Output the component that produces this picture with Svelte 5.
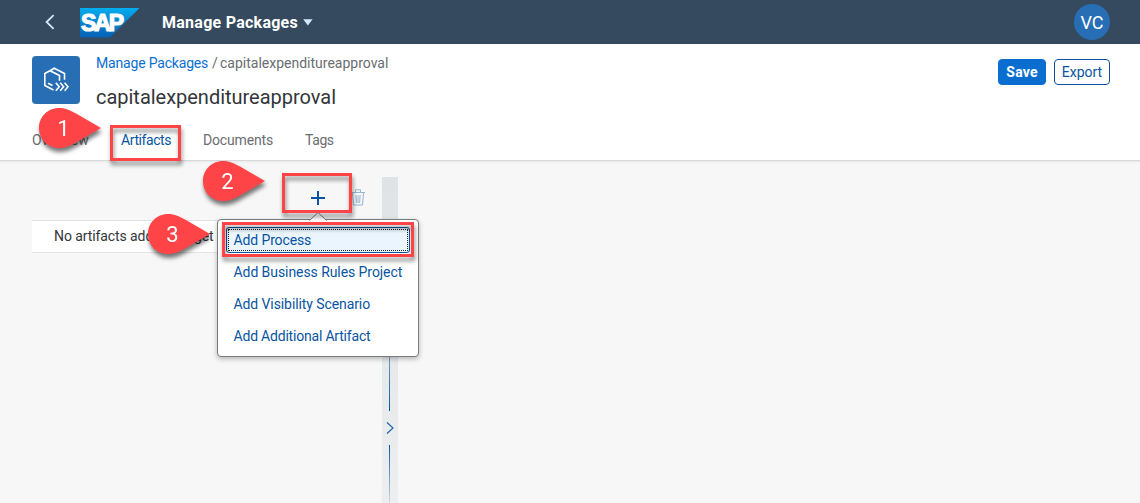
<script lang="ts">
  const tabs = [
    { label: 'Overview', cls: 'overview' },
    { label: 'Artifacts', cls: 'artifacts' },
    { label: 'Documents', cls: 'documents' },
    { label: 'Tags', cls: 'tags' }
  ];
  const actions = [
    { label: 'Add Process', cls: 'process' },
    { label: 'Add Business Rules Project', cls: 'rules' },
    { label: 'Add Visibility Scenario', cls: 'visibility' },
    { label: 'Add Additional Artifact', cls: 'additional' }
  ];
  const pins = [
    { n: 1, x: 38, y: 107 },
    { n: 2, x: 202, y: 160 },
    { n: 3, x: 147, y: 213 }
  ];
  const frames = [
    { x: 110, y: 125, w: 71, h: 36 },
    { x: 282, y: 173, w: 70, h: 40 },
    { x: 222, y: 222, w: 192, h: 35 }
  ];
</script>

<div class="page">
  <header class="shell">
    <svg class="back" width="12" height="16" viewBox="0 0 12 16"><path d="M9.6 1.2 2.6 8l7 6.8" fill="none" stroke="#d1e8ff" stroke-width="1.8" /></svg>
    <svg class="logo" width="60" height="30" viewBox="0 0 60 30">
      <defs>
        <linearGradient id="sap" x1="0" y1="0" x2="0" y2="1">
          <stop offset="0" stop-color="#00aeef" />
          <stop offset=".5" stop-color="#0a83cc" />
          <stop offset="1" stop-color="#0761b5" />
        </linearGradient>
      </defs>
      <path d="M0 0h59.500L30 29.500H0z" fill="url(#sap)" />
      <text x="1" y="23" textLength="43" lengthAdjust="spacing">SAP</text>
    </svg>
    <span class="product">Manage Packages</span>
    <svg class="caret" width="10" height="7" viewBox="0 0 10 7"><path d="M.2.3h9.400L4.900 6.500z" fill="#d1e8ff" /></svg>
    <span class="avatar">VC</span>
  </header>

  <section class="heading">
    <div class="title-row">
      <div class="package-icon">
        <svg width="48" height="48" viewBox="0 0 48 48" fill="none" stroke="#fff" stroke-width="1.600">
          <path d="M21.500 34 12.800 29.500V17.500l5.200-2.800 9.500 4.800v5.200" />
          <path d="m18.500 14.500 3.700-2.300 10.300 5.300v6.300M16 27.200l4.500 2.300" />
          <path d="m23.800 26.800 3.400 4-3.400 4M28.200 26.800l3.400 4-3.400 4M32.600 26.800l3.400 4-3.400 4" />
        </svg>
      </div>
      <div class="titles">
        <div class="crumbs"><a href="#packages">Manage Packages</a><span class="slash">/</span><span class="current">capitalexpenditureapproval</span></div>
        <h1>capitalexpenditureapproval</h1>
      </div>
      <div class="buttons">
        <button class="save">Save</button>
        <button class="export">Export</button>
      </div>
    </div>
    <nav>
      {#each tabs as tab}<span class="tab {tab.cls}">{tab.label}</span>{/each}
    </nav>
  </section>

  <main>
    <div class="list">
      <div class="toolbar">
        <svg class="plus" width="16" height="16" viewBox="0 0 16 16"><path d="M8 1v14M1 8h14" stroke="#0854a0" stroke-width="2" /></svg>
        <svg class="trash" width="14" height="17" viewBox="0 0 14 17" fill="none" stroke="#97b5d5"><path d="M0 3.500h14M4.500 3V.8h5V3M1.500 4l1 12h9l1-12M4.900 6l.5 8M7 6v8M9.100 6l-.5 8" /></svg>
      </div>
      <div class="empty"><span>No artifacts added. To get started</span></div>
    </div>
    <div class="splitter">
      <i class="rail upper"></i>
      <svg width="10" height="14" viewBox="0 0 10 14"><path d="m2 1.500 6 5.500-6 5.500" fill="none" stroke="#2467aa" stroke-width="1.200" /></svg>
      <i class="rail lower"></i>
    </div>
  </main>

  <svg class="arrow" width="18" height="10" viewBox="0 0 18 10"><path d="m.5 9.500 8.500-8 8.500 8" fill="#fff" stroke="#777" /></svg>
  <div class="menu">
    {#each actions as action, i}
      <div class="item" class:focused={i === 0}><span class={action.cls}>{action.label}</span></div>
    {/each}
  </div>

  {#each frames as f}
    <div class="frame" style="left:{f.x}px;top:{f.y}px;width:{f.w}px;height:{f.h}px"></div>
  {/each}
  {#each pins as p}
    <svg class="pin" style="left:{p.x}px;top:{p.y}px" width="66" height="44" viewBox="0 0 66 44">
      <path d="M21 1C9.500 1 1 10 1 21s8.500 20 20 20c7 0 11.500-2.500 17-5.500L63 21 38 6.500C32.500 3.500 28 1 21 1z" fill="#ff4447" />
      <text x="25.500" y="28.800" text-anchor="middle">{p.n}</text>
    </svg>
  {/each}
</div>

<style>
  :global(body) { margin: 0; overflow: hidden; }
  .page { position: relative; width: 1140px; height: 503px; overflow: hidden; display: flex; flex-direction: column; background: #f7f7f7; font-family: Roboto, sans-serif; font-size: 14px; color: #32363a; }
  .shell { height: 44px; box-sizing: border-box; flex: none; display: flex; align-items: center; padding: 0 30px 0 44px; background: #354a5f; color: #fff; }
  .logo { margin: 1px 0 0 24px; }
  .logo text { font: 700 23px "Liberation Sans", sans-serif; fill: #fff; stroke: #fff; stroke-width: 1.2px; }
  .product { margin-left: 22px; width: 136px; font-size: 16px; font-weight: 700; letter-spacing: .26px; white-space: nowrap; }
  .caret { margin-left: 5px; }
  .avatar { margin-left: auto; width: 36px; height: 36px; border-radius: 50%; background: #286eb4; display: grid; place-items: center; font-size: 18px; }
  .heading { height: 117px; box-sizing: border-box; flex: none; background: #fff; border-bottom: 1px solid #d9d9d9; box-shadow: 0 1px 2px #0001; }
  .title-row { display: flex; height: 76px; padding: 0 30px 0 32px; }
  .package-icon { width: 48px; height: 48px; margin-top: 12px; border-radius: 4px; background: #286eb4; }
  .titles { margin: 11px 0 0 16px; white-space: nowrap; }
  .crumbs { height: 18px; line-height: 17px; display: flex; color: #6a6d70; }
  .crumbs a { color: #0a6ed1; text-decoration: none; width: 112px; letter-spacing: -.18px; }
  .slash { width: 12px; padding-left: 4px; box-sizing: border-box; }
  .current { letter-spacing: 0; }
  h1 { margin: 12px 0 0; font-size: 20px; line-height: 24px; font-weight: 400; letter-spacing: -.02px; }
  .buttons { margin: 15px 0 0 auto; display: flex; gap: 8px; }
  button { height: 26px; box-sizing: border-box; padding: 0; border-radius: 4px; font: 14px Roboto, sans-serif; }
  .save { width: 48px; background: #0a6ed1; border: 1px solid #0a6ed1; color: #fff; font-weight: 700; letter-spacing: .2px; }
  .export { width: 56px; background: #fff; border: 1px solid #0854a0; color: #0854a0; }
  nav { display: flex; padding-left: 32px; height: 40px; line-height: 40px; color: #6a6d70; }
  .overview { width: 89px; }
  .artifacts { width: 82px; color: #0854a0; letter-spacing: -.42px; }
  .documents { width: 102px; letter-spacing: -.15px; }
  .tags { letter-spacing: -.4px; }
  main { flex: 1; min-height: 0; display: flex; padding: 16px 0 0 32px; }
  .list { width: 350px; }
  .toolbar { height: 43px; box-sizing: border-box; display: flex; align-items: center; justify-content: flex-end; gap: 25px; padding: 0 17px 2px 0; }
  .empty { height: 33px; box-sizing: border-box; line-height: 31px; background: #fff; border: solid #e3e3e3; border-width: 1px 0; padding-left: 22px; white-space: nowrap; overflow: hidden; letter-spacing: -.09px; }
  .splitter { width: 16px; display: flex; flex-direction: column; align-items: center; background: linear-gradient(#dfe3e5, #eceeef); }
  .rail { width: 1px; flex: none; margin-right: 1px; }
  .upper { height: 114px; margin-top: 120px; background: linear-gradient(#0854a000, #0854a0); }
  .splitter svg { flex: none; margin: 10px 0; }
  .lower { height: 66px; background: linear-gradient(#0854a0, #0854a000); }
  .menu { position: absolute; left: 217px; top: 219px; width: 202px; height: 138px; box-sizing: border-box; padding: 4px; border: 1px solid #7a7d80; border-radius: 4px; background: #fff; box-shadow: 0 2px 5px #0004; color: #0854a0; }
  .arrow { position: absolute; left: 309px; top: 211px; z-index: 1; }
  .item { height: 32px; line-height: 32px; padding-left: 11.500px; white-space: nowrap; }
  .rules { letter-spacing: -.07px; }
  .visibility { letter-spacing: -.09px; }
  .additional { letter-spacing: -.2px; }
  .process { letter-spacing: -.12px; }
  .focused { height: 26px; line-height: 25px; margin: 3px 4px 3px 4px; padding-left: 6.500px; box-sizing: border-box; border: 1px solid #0854a0; border-radius: 3px; background: #ebf5fe; outline: 1px dotted #222; outline-offset: -3px; }
  .frame { position: absolute; z-index: 2; box-sizing: border-box; border: 3px solid #ff4447; filter: drop-shadow(1px 4px 2px #0007); }
  .pin { position: absolute; z-index: 3; overflow: visible; filter: drop-shadow(1px 4px 2px #0008); }
  .pin text { font: 22px Roboto, sans-serif; fill: #fff; }
</style>
